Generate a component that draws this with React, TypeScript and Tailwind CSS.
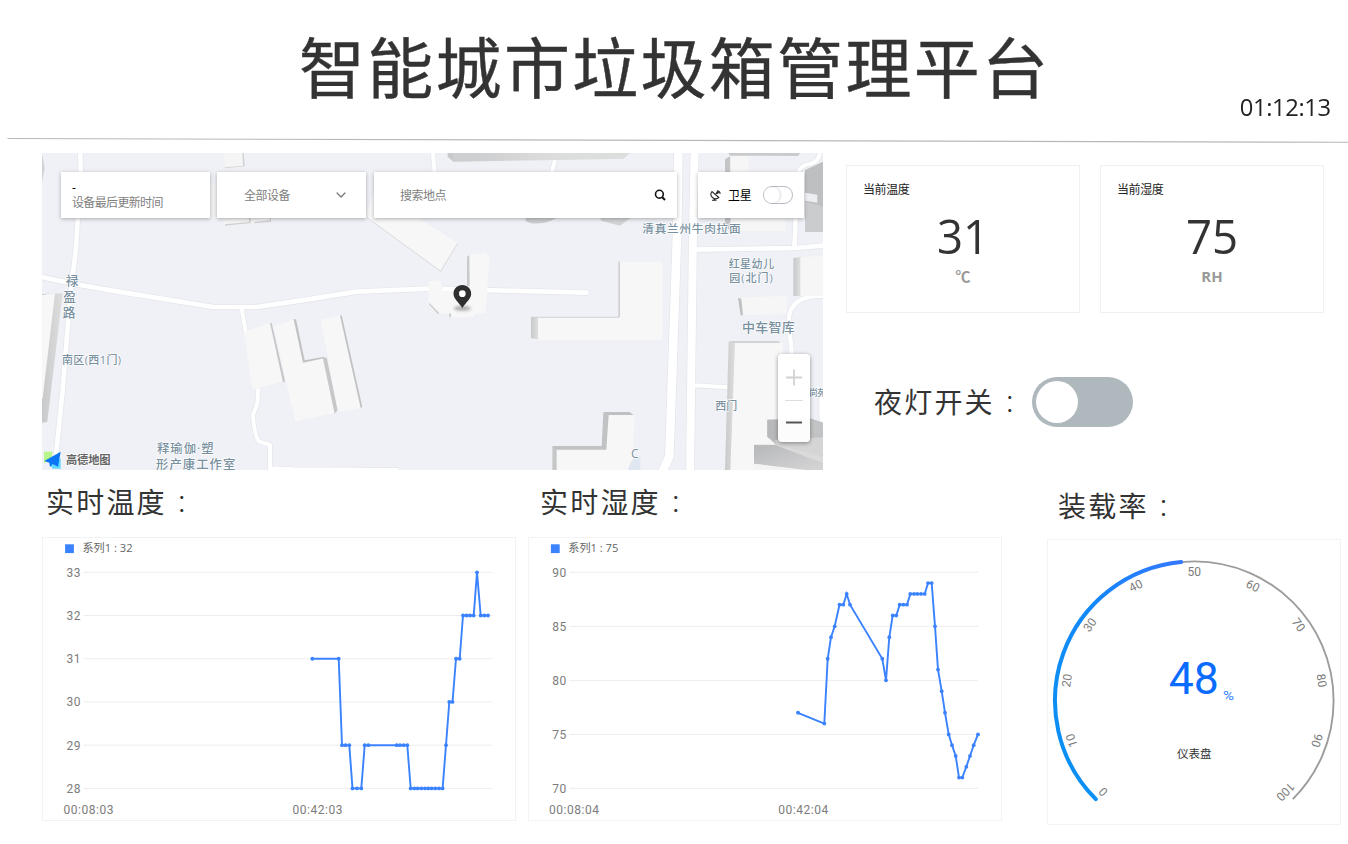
import { ChevronDown } from "lucide-react";

type Point = [number, number];

const temperature: Point[] = [
  [312.3, 31], [338.7, 31], [342, 29], [345.5, 29], [349.3, 29], [352.5, 28], [357, 28], [361.3, 28],
  [364.7, 29], [368.3, 29], [396.7, 29], [400, 29], [403.7, 29], [407.3, 29], [410.7, 28], [414.3, 28],
  [417.7, 28], [421.3, 28], [425, 28], [428.3, 28], [431.7, 28], [435.3, 28], [439, 28], [442.6, 28],
  [446, 29], [449.3, 30], [452.5, 30], [456, 31], [459.7, 31], [463, 32], [466.6, 32], [470, 32],
  [473.7, 32], [477, 33], [480.7, 32], [484.3, 32], [488, 32],
];

const humidity: Point[] = [
  [798, 77], [824.3, 76], [827.7, 82], [831, 84], [834.7, 85], [839.5, 87], [843.3, 87], [846.7, 88],
  [850, 87], [882.3, 82], [886, 80], [889.3, 84], [892.7, 86], [896.3, 86], [899.7, 87], [903.3, 87],
  [907, 87], [910.3, 88], [914, 88], [917.3, 88], [921, 88], [924.7, 88], [928, 89], [931.7, 89],
  [935, 85], [938, 81], [941.7, 79], [945, 77], [948.7, 75], [952, 74], [955.7, 73], [959, 71],
  [962.3, 71], [966.3, 72], [970, 73], [973.7, 74], [978, 75],
];

function LineChart(props: {
  left: number;
  width: number;
  plotLeft: number;
  plotRight: number;
  ticks: number[];
  data: Point[];
  legend: string;
  times: [number, string][];
}) {
  const { left, width, plotLeft, plotRight, ticks, data, legend, times } = props;
  const max = ticks[0];
  const min = ticks[ticks.length - 1];
  const y = (v: number) => 788.4 - ((v - min) / (max - min)) * 216.1;
  return (
    <svg
      className="block h-[282px] w-full font-['Roboto','Noto_Sans_CJK_SC',sans-serif]"
      viewBox={`${left} 538 ${width} 282`}
      preserveAspectRatio="none"
    >
      <rect x={plotLeft - 18.4} y="544.3" width="8.8" height="8.8" fill="#3b82ff" />
      <text
        className="font-['Open_Sans','Noto_Sans_CJK_SC',sans-serif]"
        x={plotLeft - 1}
        y="552"
        fontSize="11.5"
        fill="#666"
        textLength="50"
        lengthAdjust="spacingAndGlyphs"
      >
        {legend}
      </text>
      {ticks.map((t) => (
        <g key={t}>
          <line x1={plotLeft} x2={plotRight} y1={y(t)} y2={y(t)} stroke="#ededed" />
          <text x={plotLeft - 3} y={y(t) + 4.4} fontSize="12" fill="#7c7c7c" textAnchor="end" textLength="14">
            {t}
          </text>
        </g>
      ))}
      {times.map(([x, label]) => (
        <text key={label} x={x} y="813.9" fontSize="12" fill="#7c7c7c" textLength="50">
          {label}
        </text>
      ))}
      <polyline
        points={data.map(([x, v]) => `${x},${y(v)}`).join(" ")}
        fill="none"
        stroke="#3b82ff"
        strokeWidth="1.9"
      />
      {data.map(([x, v]) => (
        <circle key={x} cx={x} cy={y(v)} r="1.9" fill="#3b82ff" />
      ))}
    </svg>
  );
}

const CX = 1194.3;
const CY = 700.7;

function polar(deg: number, r: number): Point {
  const a = (deg * Math.PI) / 180;
  return [CX + r * Math.cos(a), CY + r * Math.sin(a)];
}

function arc(from: number, to: number, r: number) {
  const [x1, y1] = polar(from, r);
  const [x2, y2] = polar(to, r);
  return `M${x1} ${y1}A${r} ${r} 0 ${to - from > 180 ? 1 : 0} 1 ${x2} ${y2}`;
}

function Gauge() {
  return (
    <svg
      className="block h-[284px] w-full font-['Roboto','Noto_Sans_CJK_SC',sans-serif]"
      viewBox="1048 540 292 284"
    >
      <defs>
        <linearGradient id="gauge" x1="0" y1="1" x2="1" y2="0">
          <stop offset="0" stopColor="#0a92f2" />
          <stop offset="0.55" stopColor="#1288fa" />
          <stop offset="1" stopColor="#3478ff" />
        </linearGradient>
      </defs>
      <path d={arc(135, 405, 139.3)} fill="none" stroke="#9c9c9c" strokeWidth="1.9" />
      <path d={arc(135, 264.6, 139.3)} fill="none" stroke="url(#gauge)" strokeWidth="4" strokeLinecap="round" />
      {[0, 10, 20, 30, 40, 50, 60, 70, 80, 90, 100].map((v) => {
        const deg = 135 + v * 2.7;
        const [x, y] = polar(deg, 129);
        return (
          <text
            key={v}
            x={x}
            y={y + 4.2}
            transform={`rotate(${deg + 90} ${x} ${y})`}
            fontSize="12"
            fill="#7c7c7c"
            textAnchor="middle"
          >
            {v}
          </text>
        );
      })}
      <text x="1168.8" y="693.5" fontSize="44.5" fill="#0a6cff" textLength="50">
        48
      </text>
      <text x="1223" y="700" fontSize="12.5" fill="#2f83ff" textLength="11" lengthAdjust="spacingAndGlyphs">
        %
      </text>
      <text x="1177" y="757.5" fontSize="11.5" fill="#333" textLength="34.5">
        仪表盘
      </text>
    </svg>
  );
}

function MapLabel(props: { x: number; y: number; w: number; size?: number; children: string }) {
  return (
    <text
      x={props.x}
      y={props.y}
      textLength={props.w}
      fontSize={props.size ?? 35}
      fontWeight="500"
      fill="#7890a0"
      stroke="#fff"
      strokeWidth="4"
      strokeLinejoin="round"
      paintOrder="stroke"
    >
      {props.children}
    </text>
  );
}

function CityMap() {
  return (
    <svg
      className="block h-full w-full bg-[#eff1f6] font-['Open_Sans','Noto_Sans_CJK_SC',sans-serif]"
      viewBox="6 9 2343 951"
      preserveAspectRatio="none"
    >
      <defs>
        <linearGradient id="wall" x1="0" x2="1">
          <stop offset="0" stopColor="#c8c9ca" />
          <stop offset="1" stopColor="#dededf" />
        </linearGradient>
        <linearGradient id="wallDark" x1="0" x2="1" y2="1">
          <stop offset="0" stopColor="#b7b8ba" />
          <stop offset="1" stopColor="#d6d6d7" />
        </linearGradient>
        <filter id="soft" x="-30%" y="-100%" width="160%" height="300%">
          <feGaussianBlur stdDeviation="5" />
        </filter>
      </defs>

      {/* Roads: a wider grey casing under a white centre */}
      {[
        { stroke: "#e2e5ea", extra: 4 },
        { stroke: "#fff", extra: 0 },
      ].map(({ stroke, extra }) => (
        <g key={stroke} fill="none" stroke={stroke} strokeLinejoin="round">
          <path d="M121 0L122 70L112 230Q108 320 95 390L84 520L68 720L48 915" strokeWidth={14 + extra} />
          <path d="M-10 378L120 405L230 424L520 471L650 471L780 452L950 425L1165 416L1640 428" strokeWidth={14 + extra} strokeLinecap="round" />
          <path d="M605 475L618 550" strokeWidth={12 + extra} />
          <path d="M655 715L652 760L639 795Q642 850 656 874L690 885L690 955L760 958L1075 960" strokeWidth={12 + extra} />
          <path d="M1178 0L1184 70M1545 30L1535 70" strokeWidth={12 + extra} />
          <path d="M1915 0L1912 230L1888 920L1860 980" strokeWidth={26 + extra} />
          <path d="M1964 0L1959 250L1950 980" strokeWidth={24 + extra} />
          <path d="M1965 299L2265 294L2360 286M2263 300L2267 200" strokeWidth={14 + extra} />
          <path d="M2275 70Q2280 45 2310 42Q2340 35 2340 0" strokeWidth={12 + extra} />
          <path d="M1960 706L2065 712" strokeWidth={12 + extra} />
          <path d="M2360 438Q2245 432 2246 515L2258 640" strokeWidth={13 + extra} />
          <path d="M2344 740L2344 830" strokeWidth={12 + extra} />
        </g>
      ))}

      {/* West blocks */}
      <path d="M6 432L68 430L22 815L6 818Z" fill="url(#wall)" />
      <path d="M6 435L45 430L8 745L6 745Z" fill="#f7f7f7" />
      <path d="M6 10L14 55L6 95Z" fill="#d2d3d5" />
      <path d="M552 9L610 9L613 49L555 55Z" fill="#f5f5f5" />
      <path d="M607 9L611 9L614 49L555 55L555 52L609 47Z" fill="#d1d2d3" />
      <path d="M510 98H535V205H510Z" fill="#f3f3f4" />
      <path d="M545 200H692V214L555 227Z" fill="#f5f5f5" />
      <path d="M627 204H632V219L555 227V223L627 216ZM690 204H693V215L643 220V216L690 211Z" fill="#cfd0d1" />
      <path d="M611 546L690 519L732 694L638 718Z" fill="#f7f7f7" />
      <path d="M690 518L695 520L735 694L729 697Z" fill="#c4c5c6" />
      <path d="M701 530L764 508L791 635L850 622L885 788L766 815Z" fill="#f7f7f7" />
      <path d="M761 508L768 508L794 631L850 621L852 625L789 638Z" fill="#c1c2c3" />
      <path d="M848 622L860 623L893 780L884 791Z" fill="#c6c7c8" />
      <path d="M842 509L902 496L965 773L894 786Z" fill="#f7f7f7" />
      <path d="M900 497L905 496L967 771L962 774Z" fill="#c1c2c3" />

      {/* Central blocks */}
      <g transform="translate(780 0)">
        <path d="M443 9H780V30L460 35L443 20Z" fill="url(#wall)" />
        <path d="M460 9H527V29L460 34Z" fill="#cecfd0" />
        <path d="M780 9H990L970 26L780 30Z" fill="#dcdddd" />
        <path d="M200 190L225 120L350 200L473 280L422 363L202 205Z" fill="#f7f7f7" />
        <path d="M200 202L422 364L473 280" fill="none" stroke="#d9dadb" strokeWidth="3" />
        <path d="M677 204H770Q730 226 690 219L677 213Z" fill="#cccdce" />
        <path d="M386 394L421 391L429 424L504 421L504 320L508 315L556 307L569 318L557 489L525 491L521 502L452 502L449 491L416 491L386 461Z" fill="#f7f7f7" />
        <path d="M501 320L508 315L509 408L501 408ZM448 490H453V502H448ZM386 461L389 460L418 490L414 492Z" fill="#c9cacb" />
        <path d="M693 501L960 502V335H1088V570H715L693 565Z" fill="#f7f7f7" />
        <path d="M693 501H714V568L693 565Z" fill="url(#wall)" />
        <path d="M955 335H960V502H955ZM695 500H957V503H695Z" fill="#d0d1d2" />
        <path d="M757 888H905L910 788H990L1003 793L999 960H757Z" fill="#f7f7f7" />
        <path d="M757 888L770 899V960H757Z" fill="#c6c7c8" />
        <path d="M757 888H905L910 786L926 795L919 899H768Z" fill="#c1c2c3" />
        <path d="M910 786H988L1001 795H925Z" fill="#bfc0c1" />
      </g>

      {/* East blocks */}
      <g transform="translate(1560 0)">
        <path d="M121 204H211L180 227L124 212Z" fill="#d2d3d4" />
        <path d="M505 9H720L715 18L510 17Z" fill="#c9cacb" />
        <path d="M495 28L511 18V240L495 230Z" fill="#c4c5c6" />
        <path d="M511 18H566V204H677V243H515Z" fill="#f6f6f6" />
        <path d="M735 60L790 35V245H735Z" fill="#bebfc1" />
        <path d="M735 155L790 170V245H735Z" fill="#cbcccd" />
        <path d="M735 128L772 134V158L735 152Z" fill="#eceef2" />
        <path d="M720 322L790 317V437H722Z" fill="#f6f6f6" />
        <path d="M700 324L721 321V438H700Z" fill="url(#wall)" />
        <path d="M536 443L680 438V492L545 496Z" fill="#f6f6f6" />
        <path d="M534 443L544 446L549 496L542 496Z" fill="#bfc0c1" />
        <path d="M524 577H668V885L650 960H511Z" fill="#f7f7f7" />
        <path d="M506 575H525L511 960H495Z" fill="url(#wall)" />
        <path d="M505 574H655L662 578H524Z" fill="#c7c8c9" />
        <path d="M622 809L750 805L790 818V960H735L582 942V884H648L622 860Z" fill="#c2c3c4" />
        <path d="M622 809H660V884L622 860Z" fill="#b8b9bb" />
        <path d="M645 870L790 862V918L650 888Z" fill="#d5d5d6" />
        <path d="M648 884L790 918V940L648 890Z" fill="#dadada" />
        <path d="M582 886L648 886L790 940V960H740L582 941Z" fill="url(#wallDark)" />
        <path d="M582 941L740 960H582Z" fill="#f4f4f5" />
        <path d="M204 960Q215 918 241 918V960Z" fill="#dfe7f0" />
      </g>

      {/* Place names */}
      <MapLabel x={77} y={404} w={37} size={38}>禄</MapLabel>
      <MapLabel x={70} y={453} w={37} size={38}>盈</MapLabel>
      <MapLabel x={68} y={501} w={37} size={38}>路</MapLabel>
      <MapLabel x={66} y={641} w={177} size={33}>南区(西1门)</MapLabel>
      <MapLabel x={351} y={908} w={170} size={37}>释瑜伽·塑</MapLabel>
      <MapLabel x={348} y={956} w={238} size={37}>形产康工作室</MapLabel>
      <MapLabel x={1807} y={248} w={295}>清真兰州牛肉拉面</MapLabel>
      <MapLabel x={2066} y={353} w={136} size={33}>红星幼儿</MapLabel>
      <MapLabel x={2068} y={395} w={130} size={33}>园(北门)</MapLabel>
      <MapLabel x={2106} y={547} w={158} size={39}>中车智库</MapLabel>
      <MapLabel x={2026} y={779} w={66} size={33}>西门</MapLabel>
      <MapLabel x={2306} y={738} w={54} size={28}>尚苑</MapLabel>
      <MapLabel x={1773} y={924} w={25} size={37}>C</MapLabel>

      {/* Device marker */}
      <ellipse cx="1267" cy="475" rx="26" ry="7" fill="#777" opacity="0.6" filter="url(#soft)" />
      <path
        d="M1267 405C1252 405 1240.500 416.500 1240.500 431C1240.500 446 1255 455 1267 474C1279 455 1293.500 446 1293.500 431C1293.500 416.500 1282 405 1267 405Z"
        fill="#2f2f2f"
      />
      <circle cx="1267" cy="431" r="10" fill="#fff" />

      {/* Map provider mark */}
      <path d="M12 905H38L34 925L12 940Z" fill="#b7f58d" />
      <path d="M30 945L62 925V956H38Z" fill="#63d8ff" />
      <path d="M13 933L62 905L54 950L38 942L30 951L28 938Z" fill="#0a76f5" />
      <text
        x="78"
        y="942"
        fontSize="34"
        fontWeight="700"
        fill="#666"
        stroke="#fff"
        strokeWidth="4"
        paintOrder="stroke"
        textLength="134"
      >
        高德地图
      </text>
    </svg>
  );
}

function SectionTitle({ children }: { children: string }) {
  return (
    <h2 className="flex h-10 w-[155px] items-baseline whitespace-nowrap text-[28px] leading-[40px] tracking-[2.2px] text-[#333]">
      {children}
      <span className="ml-[3px] font-['Noto_Sans_CJK_JP',sans-serif] text-[24px] font-light">：</span>
    </h2>
  );
}

function StatCard(props: { title: string; value: string; unit: string; className: string }) {
  return (
    <section className={`h-[148px] border border-[#eef1f1] pt-[14px] ${props.className}`}>
      <h3 className="text-[12px] leading-5 tracking-[-0.4px] text-[#222]">{props.title}</h3>
      <p className="mt-[10px] -ml-4 scale-x-[0.95] text-center text-[48px] leading-[52px] text-[#333]">{props.value}</p>
      <p className="mt-[4px] -ml-4 text-center text-[15px] font-bold leading-5 text-[#999]">{props.unit}</p>
    </section>
  );
}

const controlBox = "h-[46px] bg-white shadow-[0_1px_4px_rgba(0,0,0,0.3)]";

export default function App() {
  return (
    <div className="h-[844px] w-[1348px] overflow-hidden bg-white font-['Open_Sans','Noto_Sans_CJK_SC',sans-serif]">
      <header className="flex h-[137px] justify-between">
        <h1 className="ml-[299px] mt-[14px] whitespace-nowrap font-['Noto_Sans_CJK_SC',sans-serif] text-[66px] leading-[100px] tracking-[2.3px] text-[#333] [-webkit-text-stroke:0.4px_#333]">
          智能城市垃圾箱管理平台
        </h1>
        <time className="mr-[17px] mt-[91px] origin-right scale-x-[0.97] text-[24.5px] leading-[32px] tracking-[-0.4px] text-[#222]">
          01:12:13
        </time>
      </header>
      <svg className="block h-[7px] w-full" viewBox="0 137 1348 7">
        <line x1="7.500" y1="138.500" x2="1348" y2="142.300" stroke="#b8b8b8" strokeWidth="1.1" />
      </svg>

      <main className="pl-[42px]">
        <div className="flex pt-[9px]">
          <section className="relative h-[317px] w-[781px] shrink-0 overflow-hidden">
            <CityMap />
            <div className="absolute left-[19px] top-[19px] flex">
              <div className={`${controlBox} w-[149px] pl-[11px] pt-[9px]`}>
                <div className="text-[12px] leading-[14px] text-black">-</div>
                <div className="whitespace-nowrap text-[12px] leading-4 tracking-[-0.65px] text-[#808080]">设备最后更新时间</div>
              </div>
              <div className={`${controlBox} ml-[7px] flex w-[149px] items-center justify-between pl-[27px] pr-[17px]`}>
                <span className="mt-[2px] text-[12px] tracking-[-0.5px] text-[#808080]">全部设备</span>
                <ChevronDown className="mb-[1px] size-4 text-[#777]" strokeWidth={1.8} />
              </div>
              <div className={`${controlBox} ml-2 flex w-[303px] items-center justify-between pl-[26px] pr-[11px]`}>
                <span className="mt-[1px] text-[12px] tracking-[-0.5px] text-[#808080]">搜索地点</span>
                <svg className="size-3" viewBox="0 0 12 12" fill="none" stroke="#111" strokeWidth="1.6">
                  <circle cx="5.400" cy="5.200" r="3.900" />
                  <path d="M8 8L11 11" strokeWidth="2" />
                </svg>
              </div>
              <div className={`${controlBox} ml-[21px] flex w-[106px] items-center pl-[12px]`}>
                <svg className="size-[11px]" viewBox="0 0 11 11" fill="none" stroke="#222" strokeWidth="1.1">
                  <path d="M2 1.500C0.500 3.500 0.700 6 2.500 7.500C4.300 9 7 9 8.800 7.500ZM5 4.800L7.500 2.500M2 10.300H6.500M4.300 8.800V10.300M7 0.700C8.800 0.800 10 2 10.200 3.700" />
                  <circle cx="7.600" cy="2.500" r="0.700" fill="#222" />
                </svg>
                <span className="ml-[7px] mt-[2px] text-[12px] tracking-[-0.3px] text-black">卫星</span>
                <span className="ml-[12px] flex h-[18px] w-[30px] items-center rounded-full border border-[#b8bac4] bg-white">
                  <span className="size-4 rounded-full bg-white shadow-[1px_0_2px_rgba(0,0,0,0.15)]" />
                </span>
              </div>
            </div>
            <div className="absolute left-[736px] top-[201px] h-[88px] w-[32px] rounded-sm bg-white/95 shadow-[0_1px_4px_rgba(0,0,0,0.4)]">
              <svg className="h-full w-full" viewBox="0 0 32 88" fill="none">
                <path d="M8 23.500H24M16 15.500V31.500" stroke="#d2d2d2" strokeWidth="1.8" />
                <path d="M7 46.500H25" stroke="#dedede" />
                <path d="M8 68.500H24" stroke="#555" strokeWidth="2" />
              </svg>
            </div>
          </section>

          <div className="flex flex-col pl-[23px] pt-[12px]">
            <div className="flex gap-5">
              <StatCard className="w-[234px] pl-4" title="当前温度" value="31" unit="℃" />
              <StatCard className="w-[224px] pl-4" title="当前湿度" value="75" unit="RH" />
            </div>
            <div className="flex items-center pl-[28px] pt-[64px]">
              <SectionTitle>夜灯开关</SectionTitle>
              <span className="ml-[3px] flex h-[50px] w-[101px] items-center rounded-full bg-[#afb8bd] pl-[4px]">
                <span className="size-[42px] rounded-full bg-white" />
              </span>
            </div>
          </div>
        </div>

        <div className="flex">
          <section className="w-[474px]">
            <div className="h-[67px] pl-[4px] pt-[12px]">
              <SectionTitle>实时温度</SectionTitle>
            </div>
            <div className="border border-[#f0f3f4]">
              <LineChart
                left={43}
                width={472}
                plotLeft={83.5}
                plotRight={492.5}
                ticks={[33, 32, 31, 30, 29, 28]}
                data={temperature}
                legend="系列1 : 32"
                times={[[63.5, "00:08:03"], [292.5, "00:42:03"]]}
              />
            </div>
          </section>
          <section className="ml-[12px] w-[474px]">
            <div className="h-[67px] pl-[12px] pt-[12px]">
              <SectionTitle>实时湿度</SectionTitle>
            </div>
            <div className="border border-[#f3f3f3]">
              <LineChart
                left={529}
                width={472}
                plotLeft={569.3}
                plotRight={978}
                ticks={[90, 85, 80, 75, 70]}
                data={humidity}
                legend="系列1 : 75"
                times={[[549, "00:08:04"], [778.3, "00:42:04"]]}
              />
            </div>
          </section>
          <section className="ml-[45px] w-[294px]">
            <div className="h-[69px] pl-[11px] pt-[16px]">
              <SectionTitle>装载率</SectionTitle>
            </div>
            <div className="border border-[#f2f3f3]">
              <Gauge />
            </div>
          </section>
        </div>
      </main>
    </div>
  );
}
